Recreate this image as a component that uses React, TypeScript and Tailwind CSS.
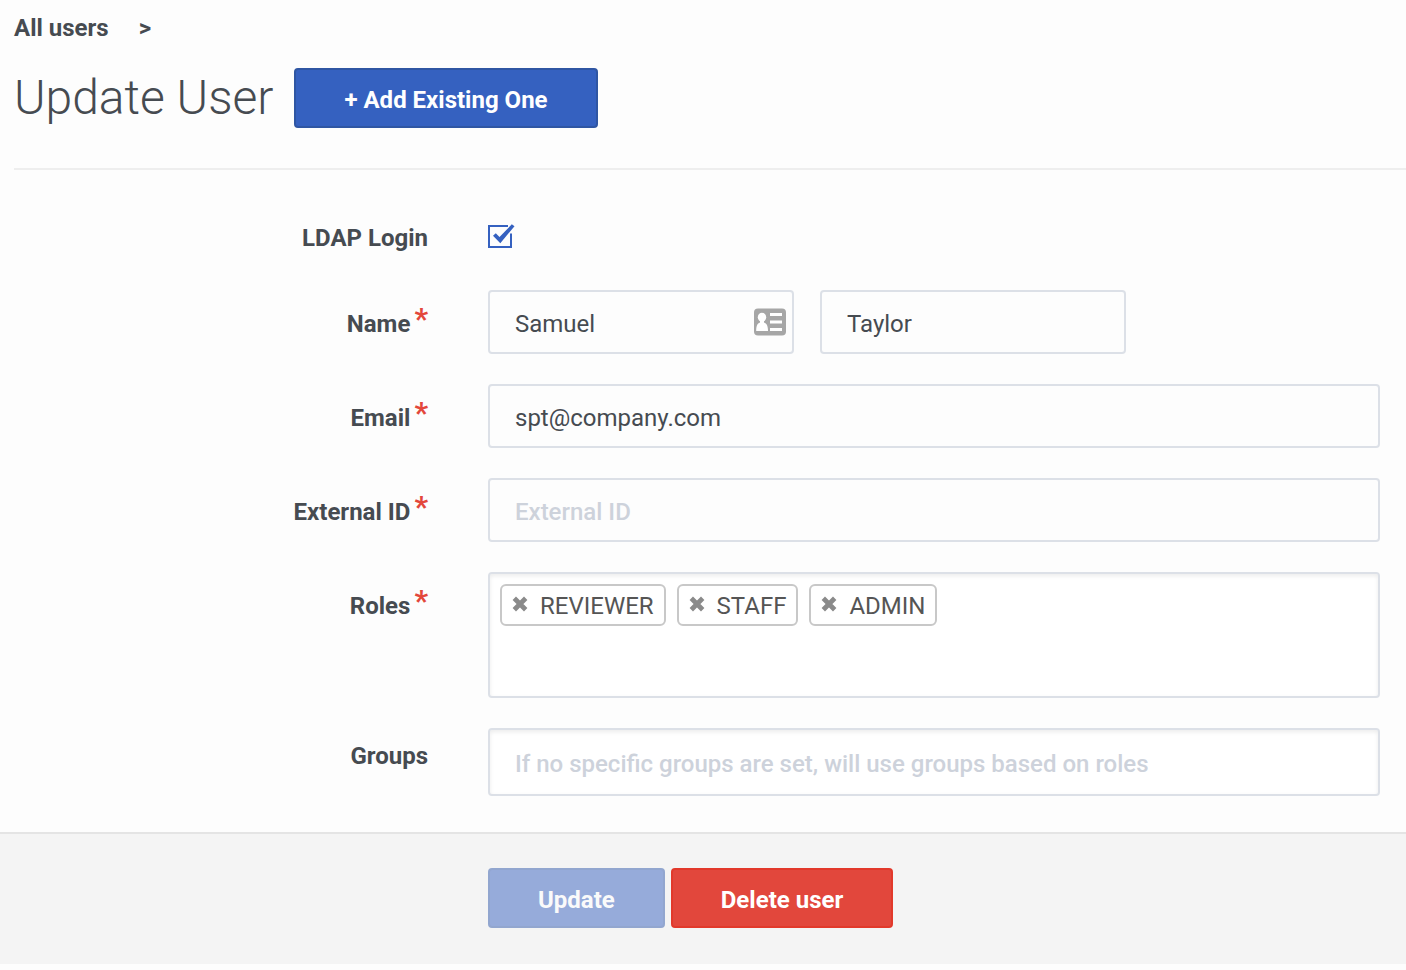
import { useState } from "react";
import type { ReactNode } from "react";

const field =
  "h-16 w-full min-w-0 rounded-sm border-2 border-[#dce0e7] bg-transparent px-[25px] pt-1 text-2xl text-[#464b51] placeholder:font-medium placeholder:text-[#cdd2db] placeholder:opacity-100 focus:outline-none focus:border-[#3561c0]";
const button =
  "h-[60px] rounded-sm border-2 px-12 pt-1 text-2xl font-bold whitespace-nowrap";

const labelOffset = {
  none: "pt-0",
  small: "pt-3.5",
  normal: "pt-5",
};

type RowProps = {
  label: string;
  htmlFor: string;
  required?: boolean;
  offset?: keyof typeof labelOffset;
  children: ReactNode;
};

function Row({ label, htmlFor, required, offset = "normal", children }: RowProps) {
  return (
    <div className="flex items-start gap-[60px]">
      <label
        htmlFor={htmlFor}
        className={`flex w-[428px] shrink-0 justify-end gap-1 text-2xl leading-7 font-bold ${labelOffset[offset]}`}
      >
        {label}
        {required && <span className="text-[30px] leading-[18px] text-[#e3473b]">*</span>}
      </label>
      <div className="min-w-0 flex-1">{children}</div>
    </div>
  );
}

function RemoveIcon() {
  return (
    <svg viewBox="0 0 16 16" className="size-4" aria-hidden="true">
      <path d="M2.300 2.300l11.400 11.400M13.700 2.300L2.300 13.700" stroke="#8a8a8a" strokeWidth="4.800" fill="none" />
    </svg>
  );
}

function ContactIcon() {
  return (
    <svg viewBox="0 0 32 28" className="h-7 w-8" aria-hidden="true">
      <rect width="32" height="27" y="0.500" rx="4" fill="#a6a6a6" />
      <ellipse cx="8" cy="9.300" rx="4.200" ry="4.600" fill="#fff" />
      <path d="M6 12h4v2.500c2.800 1 4 3.500 4 8.500H2.200c0-5 1-7.500 3.800-8.500z" fill="#fff" />
      <path d="M16 6.500h12M16 14h12M16 21.500h12" stroke="#fff" strokeWidth="3.200" />
    </svg>
  );
}

export default function App() {
  const [ldap, setLdap] = useState(true);
  const [roles, setRoles] = useState(["REVIEWER", "STAFF", "ADMIN"]);

  return (
    <div className="min-h-screen bg-[#fdfdfd] font-[Roboto,sans-serif] text-[#464b51]">
      <header className="pl-3.5">
        <nav className="flex items-center gap-[30px] pt-3.5 text-2xl leading-7 font-bold">
          <a href="#users">All users</a>
          <span>&gt;</span>
        </nav>
        <div className="flex items-center gap-[21px] border-b-2 border-[#eeeeee] pt-[26px] pb-10">
          <h1 className="text-5xl leading-[60px] font-light whitespace-nowrap">Update User</h1>
          <button type="button" className={`${button} border-[#2f56a3] bg-[#3561c0] text-white`}>
            + Add Existing One
          </button>
        </div>
      </header>

      <form onSubmit={(e) => e.preventDefault()}>
        <div className="flex flex-col gap-[30px] pt-[54px] pr-[26px] pb-9">
          <Row label="LDAP Login" htmlFor="ldap" offset="none">
            <div className="relative flex h-9 w-7 items-start">
              <input
                id="ldap"
                type="checkbox"
                checked={ldap}
                onChange={(e) => setLdap(e.target.checked)}
                className="h-7 w-7 appearance-none"
              />
              <svg viewBox="0 0 28 28" className="pointer-events-none absolute inset-0 size-7" aria-hidden="true">
                {ldap ? (
                  <>
                    <path d="M20 2H1v21h22V9.500" fill="none" stroke="#3561c0" strokeWidth="2" />
                    <path d="M5 11.800l2.800-2.500 3.700 3.700L23.800 0.300l2.700 1.900L12.300 19.300z" fill="#3561c0" />
                  </>
                ) : (
                  <path d="M1 2h22v21H1z" fill="none" stroke="#3561c0" strokeWidth="2" />
                )}
              </svg>
            </div>
          </Row>
          <Row label="Name" htmlFor="first-name" required>
            <div className="flex gap-[26px]">
              <div className="relative w-[306px]">
                <input id="first-name" type="text" defaultValue="Samuel" className={field} />
                <span className="pointer-events-none absolute top-[18px] right-2">
                  <ContactIcon />
                </span>
              </div>
              <div className="w-[306px]">
                <input aria-label="Last name" type="text" defaultValue="Taylor" className={field} />
              </div>
            </div>
          </Row>
          <Row label="Email" htmlFor="email" required>
            <input id="email" type="email" defaultValue="spt@company.com" className={field} />
          </Row>
          <Row label="External ID" htmlFor="external-id" required>
            <input id="external-id" type="text" placeholder="External ID" className={field} />
          </Row>
          <Row label="Roles" htmlFor="roles" required>
            <div className="flex min-h-[126px] flex-wrap content-start gap-[11px] rounded-sm border-2 border-[#dce0e7] bg-white p-2.5 shadow-[inset_0_2px_4px_rgba(0,0,0,0.08)]">
              {roles.map((role) => (
                <span
                  key={role}
                  className="flex h-[42px] items-center gap-3 rounded-md border-2 border-[#c8c8c8] px-2.5 pt-0.5 text-2xl text-[#555555]"
                >
                  <button
                    type="button"
                    aria-label={`Remove ${role}`}
                    onClick={() => setRoles(roles.filter((r) => r !== role))}
                    className="pb-1"
                  >
                    <RemoveIcon />
                  </button>
                  {role}
                </span>
              ))}
              <input id="roles" type="text" className="h-[42px] w-40 min-w-0 flex-1 bg-transparent text-2xl focus:outline-none" />
            </div>
          </Row>
          <Row label="Groups" htmlFor="groups" offset="small">
            <div className="rounded-sm border-2 border-[#dce0e7] bg-white shadow-[inset_0_2px_4px_rgba(0,0,0,0.08)]">
              <input
                id="groups"
                type="text"
                placeholder="If no specific groups are set, will use groups based on roles"
                className="h-16 w-full bg-transparent px-[25px] pt-1 text-2xl placeholder:font-medium placeholder:text-[#cdd2db] placeholder:opacity-100 focus:outline-none"
              />
            </div>
          </Row>
        </div>

        <footer className="flex gap-1.5 border-t-2 border-[#e4e4e4] bg-[#f4f4f4] pt-[34px] pb-9 pl-[488px]">
          <button type="submit" disabled className={`${button} border-[#92a6cf] bg-[#96abda] text-[#fafafa]`}>
            Update
          </button>
          <button type="button" className={`${button} border-[#e2392b] bg-[#e2473c] text-white`}>
            Delete user
          </button>
        </footer>
      </form>
    </div>
  );
}
